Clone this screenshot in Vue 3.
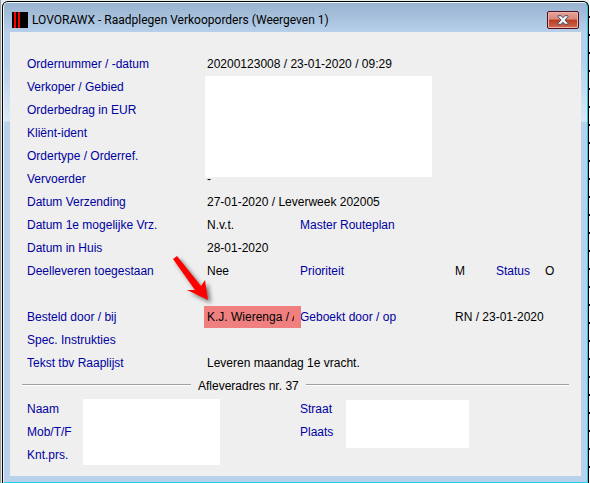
<template>
  <main class="desktop">
    <section class="window">
      <div class="frame">
        <header class="titlebar">
          <svg class="app-icon" width="16" height="16" viewBox="0 0 16 16" shape-rendering="crispEdges" aria-hidden="true">
            <rect width="16" height="16" fill="#000" />
            <rect x="2" width="2" height="16" fill="#f00" />
            <rect x="6" width="2" height="16" fill="#f00" />
          </svg>
          <h1>LOVORAWX - Raadplegen Verkooporders (Weergeven 1)</h1>
          <button type="button" class="close-button" aria-label="Sluiten">
            <svg width="12" height="10" viewBox="0 0 12 10">
              <path
                d="M1 .7h3.2L6 2.8 7.8.7H11v1L8 5l3 3.3v1H7.8L6 7.2 4.2 9.3H1v-1L4 5 1 1.7z"
                fill="#f4f4f4"
                stroke="#4b4f66"
                stroke-width="1"
              />
            </svg>
          </button>
        </header>

        <div class="content">
          <div class="fields">
            <template v-for="field in fields" :key="field.label">
              <span class="label" :style="{ gridArea: `${field.row} / ${field.col}` }">{{ field.label }}</span>
              <span
                v-if="field.value"
                class="value"
                :style="{ gridArea: `${field.row} / ${field.col + 1} / auto / ${field.end || field.col + 2}` }"
              >{{ field.value }}</span>
            </template>
            <span class="value highlight">
              <span class="clipped">K.J. Wierenga / A</span>
              <svg class="arrow" width="48" height="56" viewBox="0 0 48 56" aria-hidden="true">
                <path d="M5 2L29 32L33 26L36 46L15 36L23 36L1 5Z" class="arrow-shape" />
              </svg>
            </span>
            <div class="redacted order-mask"></div>
          </div>

          <h2 class="divider">Afleveradres nr. 37</h2>

          <div class="address">
            <span class="label name">Naam</span>
            <span class="label phone">Mob/T/F</span>
            <span class="label contact">Knt.prs.</span>
            <div class="redacted name-mask"></div>
            <span class="label street">Straat</span>
            <span class="label city">Plaats</span>
            <div class="redacted street-mask"></div>
          </div>
        </div>
      </div>
    </section>
  </main>
</template>

<script setup>
// row and col place the label, the value takes the next column up to end
const fields = [
  { label: 'Ordernummer / -datum', row: 1, col: 1, end: 4, value: '20200123008 / 23-01-2020 / 09:29' },
  { label: 'Verkoper / Gebied', row: 2, col: 1 },
  { label: 'Orderbedrag in EUR', row: 3, col: 1 },
  { label: 'Kliënt-ident', row: 4, col: 1 },
  { label: 'Ordertype / Orderref.', row: 5, col: 1 },
  { label: 'Vervoerder', row: 6, col: 1, value: '-' },
  { label: 'Datum Verzending', row: 7, col: 1, end: 4, value: '27-01-2020 / Leverweek 202005' },
  { label: 'Datum 1e mogelijke Vrz.', row: 8, col: 1, value: 'N.v.t.' },
  { label: 'Master Routeplan', row: 8, col: 3 },
  { label: 'Datum in Huis', row: 9, col: 1, value: '28-01-2020' },
  { label: 'Deelleveren toegestaan', row: 10, col: 1, value: 'Nee' },
  { label: 'Prioriteit', row: 10, col: 3, value: 'M' },
  { label: 'Status', row: 10, col: 5, value: 'O' },
  { label: 'Besteld door / bij', row: 12, col: 1 },
  { label: 'Geboekt door / op', row: 12, col: 3, end: 7, value: 'RN / 23-01-2020' },
  { label: 'Spec. Instrukties', row: 13, col: 1 },
  { label: 'Tekst tbv Raaplijst', row: 14, col: 1, end: 4, value: 'Leveren maandag 1e vracht.' }
];
</script>

<style>
body {
  background-color: #fff;
}
</style>

<style scoped>
.desktop {
  box-sizing: border-box;
  min-height: 100vh;
  padding: 1px 1px 0 2px;
  background:
    linear-gradient(#a0a0a0, #a0a0a0) left / 1px 100% no-repeat,
    repeating-linear-gradient(#fff, #fff 16px, #000 16px, #000 18px) right / 1px 100% no-repeat,
    #e4eff0;
}

.window {
  border: 1px solid #000;
  border-bottom: 0;
  border-radius: 6px 6px 0 0;
  background-color: #000;
}

.frame {
  box-sizing: border-box;
  min-height: calc(100vh - 2px);
  display: flex;
  flex-direction: column;
  padding: 0 6px 6px;
  border: 1px solid #eef5fb;
  border-right-color: #2fc4dc;
  border-bottom-color: #22cde6;
  border-radius: 5px 5px 0 0;
  background: linear-gradient(#98b3d0, #b8d0ea 30px, #b8d0ea 60px, #dce9f5 118px, #b9d1ea 119px);
}

.titlebar {
  display: flex;
  align-items: center;
  height: 29px;
  padding: 5px 2px 0;
  box-sizing: border-box;
}

.titlebar h1 {
  flex: 1;
  margin: 0 0 0 4px;
  font: 12px/16px Roboto, sans-serif;
  color: #000;
}

.close-button {
  display: flex;
  align-items: center;
  justify-content: center;
  width: 32px;
  height: 18px;
  padding: 0;
  border: 1px solid #4b1022;
  border-radius: 2px;
  background: linear-gradient(#e8a196, #d8887a 45%, #b93a20 50%, #cf6a52);
  box-shadow: inset 0 0 0 1px #eab4a8;
}

.content {
  flex: 1;
  padding: 21px 12px 0 17px;
  background-color: #efefef;
  font: 12px/23px "Liberation Sans", Arial, sans-serif;
  color: #000;
}

.fields {
  display: grid;
  grid-template-columns: 180px 93px 155px 41px 49px 1fr;
  grid-template-rows: repeat(14, 23px);
}

.label {
  color: #0000a0;
}

.label,
.value {
  white-space: nowrap;
}

.highlight {
  position: relative;
  grid-area: 12 / 2;
  margin: 0 -1px 1px -3px;
  padding-left: 3px;
  background-color: #f08080;
  line-height: 23px;
}

.clipped {
  display: block;
  width: 87px;
  height: 22px;
  overflow: hidden;
}

.arrow {
  position: absolute;
  left: -32px;
  top: -52px;
}

.arrow-shape {
  fill: #f00;
  filter: drop-shadow(3px 3px 2px rgba(0, 0, 0, 0.5));
}

.redacted {
  background-color: #fff;
}

.order-mask {
  grid-area: 2 / 2 / 7 / 4;
  width: 227px;
  height: 101px;
  margin-left: -2px;
}

.divider {
  display: flex;
  align-items: center;
  gap: 7px;
  margin: 0 0 0 -5px;
  font: inherit;
}

.divider::before,
.divider::after {
  content: "";
  height: 1px;
  margin-bottom: 4px;
  border-top: 1px solid #a0a0a0;
  background-color: #fff;
}

.divider::before {
  width: 169px;
}

.divider::after {
  flex: 1;
}

.address {
  display: grid;
  grid-template-columns: 56px 217px 46px 1fr;
  grid-template-rows: repeat(3, 23px);
}

.name { grid-area: 1 / 1; }
.phone { grid-area: 2 / 1; }
.contact { grid-area: 3 / 1; }
.street { grid-area: 1 / 3; }
.city { grid-area: 2 / 3; }

.name-mask {
  grid-area: 1 / 2 / 4 / 3;
  width: 137px;
  height: 66px;
  margin-top: 1px;
}

.street-mask {
  grid-area: 1 / 4 / 4 / 5;
  width: 123px;
  height: 48px;
  margin-top: 2px;
}
</style>
